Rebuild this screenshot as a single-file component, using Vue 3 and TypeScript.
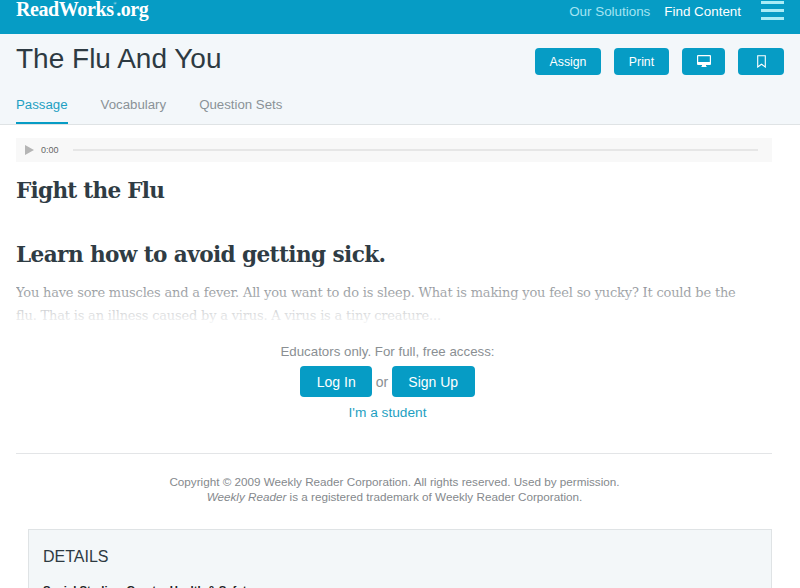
<script setup lang="ts">
const tabs = ["Passage", "Vocabulary", "Question Sets"];
</script>

<template>
  <div class="page">
    <header class="topbar">
      <div class="logo">ReadWorks<sup>®</sup><span>.org</span></div>
      <nav class="topnav">
        <a class="dim">Our Solutions</a>
        <a>Find Content</a>
        <div class="burger"><i /><i /><i /></div>
      </nav>
    </header>

    <section class="sub">
      <div class="title-row">
        <h1>The Flu And You</h1>
        <div class="actions">
          <button class="btn b-assign">Assign</button>
          <button class="btn b-print">Print</button>
          <button class="btn b-screen">
            <svg width="14" height="13" viewBox="0 0 14 13">
              <path d="M1 0h12a1 1 0 0 1 1 1v8a1 1 0 0 1-1 1H9v1.5h1V12H4v-.5h1V10H1a1 1 0 0 1-1-1V1a1 1 0 0 1 1-1zm.2 1.2V7h11.6V1.2z" fill="#fff" fill-rule="evenodd" />
            </svg>
          </button>
          <button class="btn b-mark">
            <svg width="9" height="13" viewBox="0 0 9 13">
              <path d="M.7.7h7.6v11.3L4.5 9.2.7 12z" fill="none" stroke="#fff" stroke-width="1.1" />
            </svg>
          </button>
        </div>
      </div>
      <div class="tabs">
        <a v-for="(t, i) in tabs" :key="t" :class="{ on: i === 0 }">{{ t }}</a>
      </div>
    </section>

    <main class="body">
      <div class="player">
        <span class="play" />
        <span class="time">0:00</span>
        <span class="track" />
      </div>
      <h2 class="h-first">Fight the Flu</h2>
      <h2 class="h-second">Learn how to avoid getting sick.</h2>
      <div class="teaser">
        <p>You have sore muscles and a fever. All you want to do is sleep. What is making you feel so yucky? It could be the flu. That is an illness caused by a virus. A virus is a tiny creature...</p>
        <div class="fade" />
      </div>

      <div class="gate">
        <div class="gate-note">Educators only. For full, free access:</div>
        <div class="gate-btns">
          <button class="btn big login">Log In</button>
          <span>or</span>
          <button class="btn big signup">Sign Up</button>
        </div>
        <a class="student">I'm a student</a>
      </div>

      <hr />

      <div class="copyright">
        Copyright © 2009 Weekly Reader Corporation. All rights reserved. Used by permission.<br />
        <em>Weekly Reader</em> is a registered trademark of Weekly Reader Corporation.
      </div>

      <div class="details">
        <h3>DETAILS</h3>
        <div class="subject">Social Studies, Greater Health &amp; Safety</div>
      </div>
    </main>
  </div>
</template>

<style>
html,
body {
  margin: 0;
  background: #fff;
}
</style>

<style scoped>
.page {
  width: 800px;
  height: 588px;
  overflow: hidden;
  font-family: "Liberation Sans", Arial, sans-serif;
  color: #2d3a42;
}
.topbar {
  height: 34px;
  background: #069cc5;
  display: flex;
  justify-content: space-between;
  padding: 0 16px;
}
.logo {
  font-family: "Liberation Serif", serif;
  font-weight: 700;
  font-size: 20px;
  line-height: 18px;
  letter-spacing: -0.4px;
  color: #fff;
}
.logo sup {
  font-size: 4px;
  line-height: 0;
  vertical-align: 11px;
  font-weight: 400;
}
.topnav {
  display: flex;
  font-size: 13.4px;
  line-height: 23px;
  color: #fff;
}
.topnav a {
  margin-right: 14px;
}
.topnav .dim {
  color: #a5e4f2;
}
.burger {
  width: 23px;
  margin-left: 6px;
  padding-top: 1px;
}
.burger i {
  display: block;
  height: 3px;
  margin-bottom: 5px;
  background: #a9ecf6;
}
.sub {
  height: 91px;
  box-sizing: border-box;
  background: #f3f7fa;
  border-bottom: 1px solid #dfe3e5;
  padding: 0 16px;
}
.title-row {
  display: flex;
  justify-content: space-between;
  height: 59px;
}
h1 {
  margin: 0;
  padding-top: 8px;
  font-size: 28px;
  line-height: 34px;
  font-weight: 400;
}
.actions {
  display: flex;
  padding-top: 14px;
}
.btn {
  border: 0;
  border-radius: 4px;
  background: #069cc5;
  color: #fff;
  font: 12.3px "Liberation Sans", Arial, sans-serif;
  padding: 0;
  display: flex;
  align-items: center;
  justify-content: center;
}
.actions .btn {
  height: 27px;
}
.b-assign {
  width: 66px;
  margin-right: 13px;
}
.b-print {
  width: 55px;
  margin-right: 13px;
}
.b-screen {
  width: 43px;
  margin-right: 13px;
}
.b-mark {
  width: 46px;
}
.tabs {
  display: flex;
  gap: 33px;
  font-size: 13.25px;
}
.tabs a {
  height: 31px;
  box-sizing: border-box;
  padding-top: 4px;
  line-height: 15px;
  color: #8a9297;
}
.tabs a.on {
  color: #1d9fc2;
  border-bottom: 2px solid #069cc5;
}
.body {
  padding: 13px 28px 0 16px;
}
.player {
  height: 24px;
  background: #f8f8f8;
  display: flex;
  align-items: center;
  padding-left: 9px;
}
.play {
  width: 0;
  height: 0;
  border-left: 9px solid #b5b5b5;
  border-top: 5.5px solid transparent;
  border-bottom: 5.5px solid transparent;
}
.time {
  font-size: 9px;
  color: #666;
  margin-left: 7px;
  width: 32px;
}
.track {
  width: 685px;
  height: 2px;
  background: #e6e6e6;
}
h2 {
  margin: 0;
  font-family: "DejaVu Serif", serif;
  font-weight: 700;
  font-size: 21.6px;
  line-height: 30px;
  color: #2f3c44;
  letter-spacing: -0.6px;
}
.h-first {
  margin-top: 14px;
  letter-spacing: -0.75px;
}
.h-second {
  margin-top: 34px;
}
.teaser {
  position: relative;
  margin-top: 12px;
  height: 45px;
  overflow: hidden;
}
.teaser p {
  width: 735px;
  margin: 0;
  font-family: "DejaVu Serif", serif;
  font-size: 13px;
  line-height: 22.5px;
  letter-spacing: -0.2px;
  color: #84898e;
}
.fade {
  position: absolute;
  inset: 0;
  background: linear-gradient(to bottom, rgba(255, 255, 255, 0), #fff);
}
.gate {
  margin-top: 17px;
  padding-right: 13px;
  text-align: center;
  font-size: 13.3px;
  color: #8a8f93;
}
.gate-note {
  line-height: 15px;
}
.gate-btns {
  display: flex;
  justify-content: center;
  align-items: center;
  gap: 3.5px;
  margin-top: 7px;
  font-size: 14px;
}
.big {
  height: 31px;
  font-size: 14px;
}
.login {
  width: 72px;
}
.signup {
  width: 83px;
}
.student {
  display: block;
  margin-top: 8px;
  font-size: 13.7px;
  line-height: 16px;
  color: #1d9fc2;
}
hr {
  border: 0;
  height: 1px;
  background: #e3e5e7;
  margin: 32px 0 0;
}
.copyright {
  margin-top: 20px;
  padding-left: 1px;
  text-align: center;
  font-size: 11.7px;
  line-height: 15px;
  color: #85898d;
}
.details {
  margin: 25px 0 0 12px;
  height: 90px;
  box-sizing: border-box;
  background: #f3f7f9;
  border: 1px solid #dfe3e5;
  padding: 17px 14px;
}
h3 {
  margin: 0;
  font-size: 16px;
  font-weight: 400;
  line-height: 20px;
}
.subject {
  margin-top: 17px;
  font-size: 11.3px;
  font-weight: 700;
  color: #222;
}
</style>
